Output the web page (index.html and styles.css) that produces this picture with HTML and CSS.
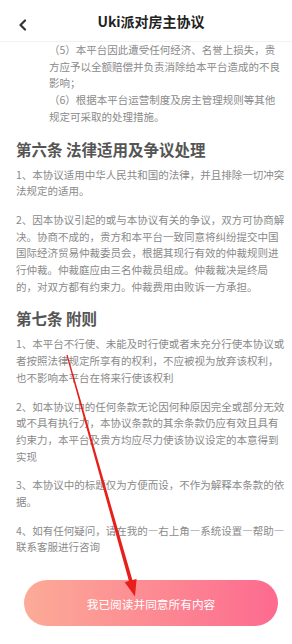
FILE: index.html
```html
<!DOCTYPE html>
<html lang="zh-CN">
<head>
    <meta charset="UTF-8">
    <meta name="viewport" content="width=device-width, initial-scale=1.0">
    <title>Uki派对房主协议</title>
    <link rel="stylesheet" href="styles.css">
</head>
<body>
    <div class="page">
        <header class="topbar">
            <span class="back">
                <svg width="9" height="12" viewBox="0 0 9 12"><path d="M7 1.5 L2.5 6 L7 10.5" fill="none" stroke="#333" stroke-width="2.2" stroke-linecap="round" stroke-linejoin="round"/></svg>
            </span>
            <h1>Uki派对房主协议</h1>
        </header>

        <main class="content">
            <div class="sub">
                <p>（5）本平台因此遭受任何经济、名誉上损失，贵方应予以全额赔偿并负责消除给本平台造成的不良影响；</p>
                <p>（6）根据本平台运营制度及房主管理规则等其他规定可采取的处理措施。</p>
            </div>

            <h2>第六条 法律适用及争议处理</h2>
            <p class="item">1、本协议适用中华人民共和国的法律，并且排除一切冲突法规定的适用。</p>
            <p class="item">2、因本协议引起的或与本协议有关的争议，双方可协商解决。协商不成的，贵方和本平台一致同意将纠纷提交中国国际经济贸易仲裁委员会，根据其现行有效的仲裁规则进行仲裁。仲裁庭应由三名仲裁员组成。仲裁裁决是终局的，对双方都有约束力。仲裁费用由败诉一方承担。</p>

            <h2>第七条 附则</h2>
            <p class="item">1、本平台不行使、未能及时行使或者未充分行使本协议或者按照法律规定所享有的权利，不应被视为放弃该权利，也不影响本平台在将来行使该权利</p>
            <p class="item">2、如本协议中的任何条款无论因何种原因完全或部分无效或不具有执行力，本协议条款的其余条款仍应有效且具有约束力，本平台及贵方均应尽力使该协议设定的本意得到实现</p>
            <p class="item">3、本协议中的标题仅为方便而设，不作为解释本条款的依据。</p>
            <p class="item">4、如有任何疑问，请在我的—右上角—系统设置—帮助—联系客服进行咨询</p>
        </main>

        <footer class="bottom">
            <button class="agree">我已阅读并同意所有内容</button>
        </footer>

        <!-- red annotation arrow drawn over the page -->
        <svg class="mark" width="292" height="644" viewBox="0 0 292 644">
            <polygon points="66.4,355.2 67.6,354.8 132.4,580.1 136.6,579 135,596.5 124.7,582.3 128.9,581.1" fill="#e8201c"/>
        </svg>
    </div>
</body>
</html>
```

FILE: styles.css
```css
body {
    margin: 0;
    background: #fff;
    font-family: "Noto Sans CJK SC", "Noto Sans", sans-serif;
}

.page {
    position: relative;
    width: 292px;
    height: 644px;
    display: flex;
    flex-direction: column;
    overflow: hidden;
}

.topbar {
    height: 42px;
    display: flex;
    align-items: center;
    justify-content: center;
    padding-left: 10px;
    border-bottom: 1px solid #f2f2f2;
    box-sizing: border-box;
    position: relative;
}

.back {
    position: absolute;
    left: 18px;
    top: 19px;
    line-height: 0;
}

.topbar h1 {
    margin: 0;
    font-size: 14px;
    font-weight: bold;
    color: #222;
}

.content {
    flex: 1;
    overflow: hidden;
    padding: 0 6px 0 16px;
    color: #8a8a8a;
    font-size: 10.5px;
    line-height: 16.7px;
}

.content p {
    margin: 0;
}

.sub {
    padding: 0 4px 0 33px;
}

.content h2 {
    margin: 12px 0 7px;
    font-size: 15.5px;
    line-height: 22px;
    font-weight: bold;
    color: #555;
}

.item + .item {
    margin-top: 12px;
}

.bottom {
    padding: 0 14px 18px 24px;
}

.agree {
    width: 100%;
    height: 46px;
    border: none;
    border-radius: 23px;
    background: linear-gradient(90deg, #fcab97, #fd6a8f);
    color: #fff;
    font-family: "Noto Sans CJK SC", sans-serif;
    font-size: 11.7px;
    cursor: pointer;
}

.mark {
    position: absolute;
    left: 0;
    top: 0;
    pointer-events: none;
}
```
